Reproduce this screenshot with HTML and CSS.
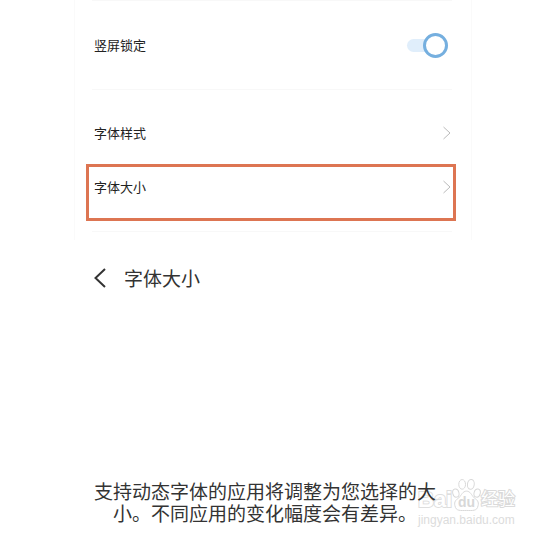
FILE: index.html
```
<!DOCTYPE html>
<html lang="zh-CN">
<head>
    <meta charset="UTF-8">
    <meta name="viewport" content="width=device-width, initial-scale=1.0">
    <title>字体大小</title>
    <link rel="stylesheet" href="styles.css">
</head>
<body>
    <section class="settings">
        <div class="group">
            <div class="row row-switch">
                <label for="lock">竖屏锁定</label>
                <input type="checkbox" id="lock" class="switch" checked>
            </div>
        </div>
        <div class="group group-font">
            <a href="#style" class="row">
                <span>字体样式</span>
                <svg class="chevron" viewBox="0 0 10 16"><path d="M1.500 2 8 8l-6.500 6"/></svg>
            </a>
            <a href="#size" class="row row-marked">
                <span>字体大小</span>
                <svg class="chevron" viewBox="0 0 10 16"><path d="M1.500 2 8 8l-6.500 6"/></svg>
            </a>
        </div>
    </section>

    <main id="size" class="page">
        <header class="title-bar">
            <button type="button" class="back" aria-label="返回">
                <svg viewBox="0 0 14 20"><path d="M12 1 2.500 10l9.500 9"/></svg>
            </button>
            <h1>字体大小</h1>
        </header>
        <p class="hint">支持动态字体的应用将调整为您选择的大小。不同应用的变化幅度会有差异。</p>
        <div class="watermark">
            <div class="brand">
                <span class="bai">Bai</span>
                <span class="paw">
                    <svg viewBox="0 0 30 34">
                        <ellipse cx="4" cy="15" rx="3.200" ry="4.300" transform="rotate(-15 4 15)"/>
                        <ellipse cx="10.500" cy="6" rx="3.500" ry="5"/>
                        <ellipse cx="19.500" cy="6" rx="3.500" ry="5" transform="rotate(8 19.500 6)"/>
                        <ellipse cx="26" cy="15" rx="3.200" ry="4.300" transform="rotate(15 26 15)"/>
                        <path d="M15 13c-4 0-5 4-8 7-3 2-5 4-4 8 1 6 6 5 12 5s11 1 12-5c1-4-1-6-4-8-3-3-4-7-8-7z"/>
                    </svg>
                    <span class="du">du</span>
                </span>
                <span class="jingyan">经验</span>
            </div>
            <div class="site">jingyan.baidu.com</div>
        </div>
    </main>
</body>
</html>
```

FILE: styles.css
```
*,
*::before {
    box-sizing: border-box;
}

body {
    margin: 0;
    background: #fff;
    color: #222;
    font-family: "Noto Sans CJK SC", sans-serif;
}

.settings {
    margin: 0 74px;
    padding: 0 19px 8px 17px;
    border: 1px solid #fafafa;
    border-width: 0 1px;
}

.group {
    border-top: 1px solid #f8f8f8;
}

.group-font {
    padding: 16px 0 10px;
    border-bottom: 1px solid #f8f8f8;
}

.row {
    display: flex;
    align-items: center;
    justify-content: space-between;
    height: 54px;
    padding: 0 0 0 2px;
    color: #222;
    font-size: 13px;
    line-height: 20px;
    text-decoration: none;
}

.row-switch {
    height: 88px;
    padding-right: 4px;
}

.row-marked {
    height: auto;
    margin: 4px -4px 0 -6px;
    padding: 10px 1px 21px 5px;
    border: 3px solid #dd7552;
}

.chevron {
    width: 10px;
    height: 16px;
    fill: none;
    stroke: #bbb;
    stroke-width: 1;
}

/* switch */
.switch {
    appearance: none;
    display: flex;
    align-items: center;
    width: 41px;
    height: 13px;
    margin: 0;
    border-radius: 7px;
    background: #e0eefb;
    cursor: pointer;
}

.switch::before {
    content: "";
    flex: none;
    width: 25px;
    height: 25px;
    border: 3px solid #75afdf;
    border-radius: 50%;
    background: #fff;
}

.switch:checked::before {
    margin-left: auto;
}

.page {
    position: relative;
    margin: 0 92px;
    padding: 24px 0 12px;
}

.title-bar {
    display: flex;
    align-items: center;
    gap: 16px;
    height: 28px;
}

.back {
    width: 16px;
    height: 20px;
    padding: 0 0 0 1px;
    border: none;
    background: none;
    cursor: pointer;
}

.back svg {
    display: block;
    width: 14px;
    height: 20px;
    fill: none;
    stroke: #333;
    stroke-width: 2;
}

h1 {
    margin: 0;
    color: #333;
    font-size: 19px;
    font-weight: 400;
    line-height: 26px;
}

.hint {
    max-width: 346px;
    margin: 188px auto 0 0;
    color: #333;
    font-size: 19px;
    line-height: 22px;
    text-align: center;
}

/* watermark in the lower right corner, behind the text */
.watermark {
    position: absolute;
    z-index: -1;
    right: -62px;
    bottom: 8px;
    width: 98px;
    color: #fff;
    font-family: "Liberation Sans", "Noto Sans CJK SC", sans-serif;
    pointer-events: none;
}

.brand {
    display: flex;
    align-items: flex-end;
    height: 34px;
    line-height: 24px;
}

.bai {
    width: 34px;
    font-size: 22px;
    font-weight: 700;
    -webkit-text-stroke: 2px #dedede;
    paint-order: stroke fill;
}

.paw {
    display: grid;
    place-items: end center;
    width: 29px;
}

.paw > * {
    grid-area: 1 / 1;
}

.paw svg {
    width: 29px;
    height: 34px;
    fill: #fff;
    stroke: #d8d8d8;
    stroke-width: 1;
    overflow: visible;
}

.du {
    color: #d8d8d8;
    font-size: 14px;
    font-weight: 700;
    line-height: 20px;
}

.jingyan {
    font-size: 17px;
    font-weight: 400;
    -webkit-text-stroke: 2px #dadada;
    paint-order: stroke fill;
}

.site {
    color: #dcdcdc;
    font-size: 12px;
    line-height: 16px;
}
```
